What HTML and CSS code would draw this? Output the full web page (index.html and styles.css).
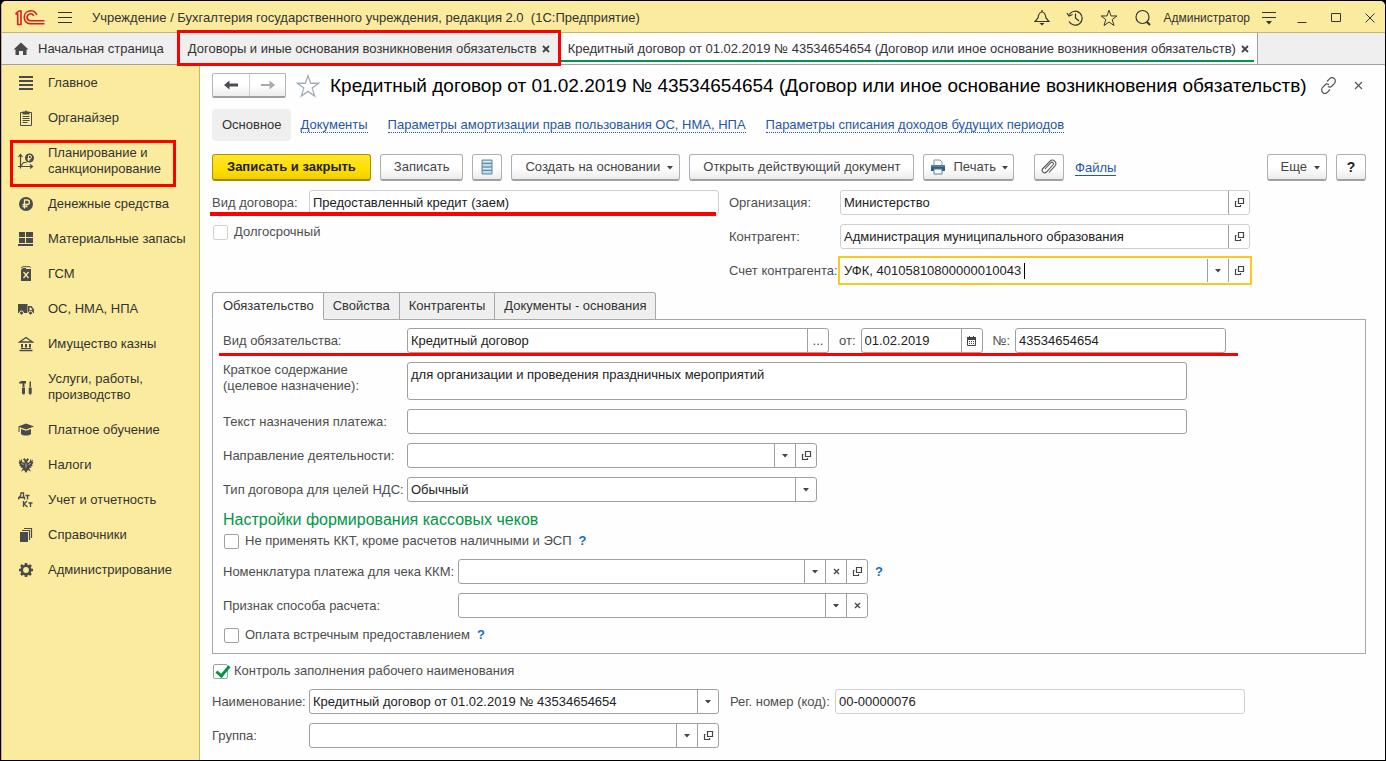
FILE: index.html
```html
<!DOCTYPE html>
<html lang="ru">
<head>
<meta charset="utf-8">
<title>Кредитный договор от 01.02.2019 № 43534654654</title>
<link rel="stylesheet" href="styles.css">
</head>
<body>
<svg class="defs" aria-hidden="true">
  <symbol id="open" viewBox="0 0 11 11"><path d="M4.500 1.500h5v5h-5zM2.500 4.500h-1v5h5v-1.500" fill="none" stroke="currentColor" stroke-width="1.200"/></symbol>
  <symbol id="arrow" viewBox="0 0 6 4"><path d="M0 0h6L3 3.500z" fill="currentColor"/></symbol>
  <symbol id="clear" viewBox="0 0 7 7"><path d="M1 1l5 5M6 1L1 6" stroke="currentColor" stroke-width="1.300"/></symbol>
  <symbol id="star" viewBox="0 0 22 22"><path d="M11 1.500l2.500 7h7.200l-5.800 4.400 2.200 7.300L11 15.900l-6.100 4.300 2.200-7.300L1.300 8.500h7.200z" fill="none" stroke="currentColor" stroke-width="1.200"/></symbol>
</svg>
<div class="app">
  <header class="titlebar">
    <svg class="logo" viewBox="0 0 30 17" width="30" height="17" aria-label="1С"><g fill="none" stroke="#d9201f" stroke-width="1.600"><path d="M.5 5L4 2h2v13.500M.5 5h2.200v10.500M2 15.500h4.700"/><path d="M21.800 6A6.500 6.500 0 1 0 15.500 14.800H29.500"/><path d="M18.800 7A3.500 3.500 0 1 0 15.500 11.800H29.500"/></g></svg>
    <button class="plain burger" aria-label="Меню"><svg width="16" height="14" viewBox="0 0 16 14"><path d="M1 1.500h14M1 6.500h14M1 11.500h14" stroke="#333"/></svg></button>
    <span class="app-title">Учреждение / Бухгалтерия государственного учреждения, редакция 2.0&nbsp; (1С:Предприятие)</span>
    <div class="title-tools">
      <button class="plain" aria-label="Уведомления"><svg width="16" height="18" viewBox="0 0 16 18"><path d="M1 12.500h14l-3-3.500C11.500 5.500 10.500 3 8 3S4.500 5.500 4 9zM8 3V1" fill="none" stroke="#333" stroke-width="1.200"/><path d="M5.500 14h5L8 16.500z" fill="#333"/></svg></button>
      <button class="plain" aria-label="История"><svg width="18" height="18" viewBox="0 0 18 18"><path d="M3.200 5.500A7 7 0 1 1 3 12.500M1 4l2 3 3.500-1.500M9.500 4.500V9l3.500 3" fill="none" stroke="#333" stroke-width="1.200"/></svg></button>
      <button class="plain" aria-label="Избранное"><svg class="dark" width="18" height="18"><use href="#star"/></svg></button>
      <button class="plain" aria-label="Поиск"><svg width="18" height="18" viewBox="0 0 18 18"><circle cx="8.500" cy="8" r="6.500" fill="none" stroke="#333" stroke-width="1.200"/><path d="M12.500 12.500l3.500 3.500" stroke="#333" stroke-width="2"/></svg></button>
      <span class="user">Администратор</span>
      <button class="plain" aria-label="Настройки"><svg width="16" height="14" viewBox="0 0 16 14"><path d="M1 1.500h14M1 6.500h14" stroke="#333"/><path d="M5 10h6l-3 3.500z" fill="#333"/></svg></button>
      <button class="plain win" aria-label="Свернуть"><svg width="12" height="12" viewBox="0 0 12 12"><path d="M1.500 10.500h9" stroke="#333"/></svg></button>
      <button class="plain win" aria-label="Развернуть"><svg width="12" height="12" viewBox="0 0 12 12"><path d="M1.500 1.500h9v8h-9z" fill="none" stroke="#333"/></svg></button>
      <button class="plain win" aria-label="Закрыть"><svg width="12" height="12" viewBox="0 0 12 12"><path d="M1.500 1.500l9 9M10.500 1.500l-9 9" stroke="#333"/></svg></button>
    </div>
  </header>
  <nav class="tabbar">
    <a class="wtab home" href="#"><svg width="16" height="14" viewBox="0 0 16 14"><path d="M8 .5L.5 7.500h2V13H6V9h4v4h3.500V7.500h2z" fill="#4a4a4a"/></svg>Начальная страница</a>
    <a class="wtab marked" href="#">Договоры и иные основания возникновения обязательств<button class="plain" aria-label="Закрыть"><svg width="8" height="8" viewBox="0 0 8 8"><path d="M1 1l6 6M7 1L1 7" stroke="#444" stroke-width="1.800"/></svg></button></a>
    <a class="wtab active" href="#">Кредитный договор от 01.02.2019 № 43534654654 (Договор или иное основание возникновения обязательств)<button class="plain" aria-label="Закрыть"><svg width="8" height="8" viewBox="0 0 8 8"><path d="M1 1l6 6M7 1L1 7" stroke="#444" stroke-width="1.800"/></svg></button></a>
  </nav>
  <div class="body">
    <nav class="sidebar">
      <a href="#"><svg viewBox="0 0 16 16"><path d="M1 2h14M1 6h14M1 10h14M1 14h14" stroke="#4a4a4a" stroke-width="2"/></svg>Главное</a>
      <a href="#"><svg viewBox="0 0 16 16"><path d="M2.500 2.500h11v13h-11zM4.500 6.500h7M4.500 8.500h7M4.500 10.500h7M4.500 12.500h5" fill="none" stroke="#4a4a4a"/><path d="M4.500 4.500V1.500H7a1 1 0 0 1 2 0h2.500v3z" fill="#4a4a4a"/></svg>Органайзер</a>
      <a class="marked" href="#"><svg viewBox="0 0 16 16"><path d="M2.500 15.500V2M0 13.500h14M.5 4l2-2.500 2 2.500M12 11.500l2.500 2-2.500 2M2.500 13.500l3-4h3" fill="none" stroke="#4a4a4a" stroke-width="1.200"/><circle cx="11.500" cy="5" r="4.500" fill="#4a4a4a"/><path d="M10.500 8V2.500H12a1.400 1.400 0 0 1 0 3H9.500M9.500 6.800h3" fill="none" stroke="#fbeb9e"/></svg>Планирование и санкционирование</a>
      <a href="#"><svg viewBox="0 0 16 16"><circle cx="8" cy="8" r="7" fill="#4a4a4a"/><path d="M6.500 12.500V4h2.700a2.200 2.200 0 0 1 0 4.500H4.500M4.500 10.500h5" fill="none" stroke="#fbeb9e" stroke-width="1.300"/></svg>Денежные средства</a>
      <a href="#"><svg viewBox="0 0 16 16"><path d="M1 1h6v5H1zM8 1h7v5H8zM1 7h6v5H1zM8 7h7v5H8zM0 13h15v2H0z" fill="#4a4a4a"/></svg>Материальные запасы</a>
      <a href="#"><svg viewBox="0 0 16 16"><path d="M3 4l2-2h3v1h5v12H3z" fill="#4a4a4a"/><path d="M3 2l2-1.300h7l1 1" fill="none" stroke="#4a4a4a"/><path d="M5.500 6l5 6M10.500 6l-5 6" stroke="#fbeb9e" stroke-width="1.300"/></svg>ГСМ</a>
      <a href="#"><svg viewBox="0 0 16 16"><path d="M0 3h9.500v9H0zM10 5h3.500L16 8.500V12h-6z" fill="#4a4a4a"/><path d="M11.500 6.500H13L14.500 9h-3z" fill="#fbeb9e"/><circle cx="3.500" cy="12" r="2" fill="#4a4a4a" stroke="#fbeb9e"/><circle cx="12.500" cy="12" r="2" fill="#4a4a4a" stroke="#fbeb9e"/></svg>ОС, НМА, НПА</a>
      <a href="#"><svg viewBox="0 0 16 16"><path d="M1.500 6L8 1.500 14.500 6zM1.500 14.500h13" fill="none" stroke="#4a4a4a" stroke-width="1.300"/><path d="M4 8v3.500M8 8v3.500M12 8v3.500" stroke="#4a4a4a" stroke-width="2"/><path d="M3 12.500h10" stroke="#4a4a4a"/></svg>Имущество казны</a>
      <a href="#"><svg viewBox="0 0 16 16"><path d="M1 3.500L3 2h5v2.500H6.500V8h-2V4.500L1 4.500zM4 8.500h3V14a1 1 0 0 1-3 0zM11.500 2.500h1.500V8h-1.500zM10.700 8.500h3V14a1 1 0 0 1-3 0z" fill="#4a4a4a"/></svg>Услуги, работы, производство</a>
      <a href="#"><svg viewBox="0 0 16 16"><path d="M8 1.500L16 4.500 8 7.500 0 4.500zM3 7l5 1.800L13 7v5c-2 2-8 2-10 0zM.5 5h1v5h-1z" fill="#4a4a4a"/></svg>Платное обучение</a>
      <a href="#"><svg viewBox="0 0 16 16"><path d="M8 3L6.500 1 5 2.500 6.500 4v2L4.500 5 3 1.500 2.700 4 1 2.500 1.500 5 .5 5l1.500 3-1 .3L3.500 10l-1.500.5L5 11l-2 3.500L6 13l2 3 2-3 3 1.500L11 11l3-.5-1.500-.5L15 8.300 14 8l1.500-3h-1L15 2.500 13.300 4 13 1.500 11.500 5l-2 1V4L11 2.500 9.500 1z" fill="#4a4a4a"/><path d="M8 6.500v4M3.500 6l2 2M12.500 6l-2 2" stroke="#fbeb9e" stroke-width=".7"/></svg>Налоги</a>
      <a href="#"><svg viewBox="0 0 16 16"><path d="M1.500 5.500c1-1 1.500-2.500 1.500-4.500h2.500v4.500M.7 7.500v-2h5.800v2M7.500 3.500h4M9.500 3.500v4M5.500 9v6M9 9l-3 3 3.500 3M10.500 11h4M12.500 11v4" fill="none" stroke="#4a4a4a" stroke-width="1.300"/></svg>Учет и отчетность</a>
      <a href="#"><svg viewBox="0 0 16 16"><path d="M2 5h8v10H2z" fill="#4a4a4a"/><path d="M4 3.500h7.500V13M6 1.500h7.500V11" fill="none" stroke="#4a4a4a" stroke-width="1.200"/></svg>Справочники</a>
      <a href="#"><svg viewBox="0 0 16 16"><circle cx="8" cy="8" r="4.200" fill="none" stroke="#4a4a4a" stroke-width="2.600"/><path d="M8 1v2.500M8 12.500V15M1 8h2.500M12.500 8H15M3 3l1.800 1.800M11.200 11.200L13 13M13 3l-1.800 1.800M4.800 11.200L3 13" stroke="#4a4a4a" stroke-width="2.600"/></svg>Администрирование</a>
    </nav>
    <main class="main">
      <div class="head">
        <div class="history"><button aria-label="Назад"><svg width="14" height="12" viewBox="0 0 14 12"><path d="M0 6l5.500-4.500V4.500H14v3H5.500v3z" fill="#4b4b55"/></svg></button><button aria-label="Вперед"><svg width="14" height="12" viewBox="0 0 14 12"><path d="M14 6L8.500 1.500V5H0v2h8.500v3.500z" fill="#aaa"/></svg></button></div>
        <button class="plain fav" aria-label="В избранное"><svg width="24" height="24"><use href="#star"/></svg></button>
        <h1>Кредитный договор от 01.02.2019 № 43534654654 (Договор или иное основание возникновения обязательств)</h1>
        <button class="plain link" aria-label="Ссылка"><svg width="17" height="17" viewBox="0 0 17 17"><path d="M7 4.500l2.500-2.700a3.300 3.300 0 0 1 5 4.500L12 9a3 3 0 0 1-4 .3M10 12.500l-2.500 2.700a3.300 3.300 0 0 1-5-4.500L5 8a3 3 0 0 1 4-.3" fill="none" stroke="#555" stroke-width="1.200"/></svg></button>
        <button class="plain close" aria-label="Закрыть"><svg width="9" height="9" viewBox="0 0 9 9"><path d="M1 1l7 7M8 1L1 8" stroke="#555" stroke-width="1.200"/></svg></button>
      </div>
      <nav class="sections">
        <a class="current" href="#">Основное</a>
        <a href="#"><span>Документы</span></a>
        <a href="#"><span>Параметры амортизации прав пользования ОС, НМА, НПА</span></a>
        <a href="#"><span>Параметры списания доходов будущих периодов</span></a>
      </nav>
      <div class="toolbar">
        <button class="btn primary">Записать и закрыть</button>
        <button class="btn">Записать</button>
        <button class="btn icon" aria-label="Реестр"><svg width="12" height="16" viewBox="0 0 12 16"><path d="M1 1h10v14H1z" fill="#a9cde0" stroke="#5f8ba5"/><path d="M1 4.500h10M1 8h10M1 11.500h10" stroke="#5f8ba5"/><path d="M2 2.500h8M2 6h8M2 9.500h8M2 13h8" stroke="#d7eaf3"/></svg></button>
        <button class="btn">Создать на основании<svg class="arr"><use href="#arrow"/></svg></button>
        <button class="btn">Открыть действующий документ</button>
        <button class="btn print"><svg width="16" height="16" viewBox="0 0 16 16"><path d="M4 6V1h6l2 2v3" fill="#fff" stroke="#7d97aa"/><path d="M1 6h14v6H1z" fill="#2f5f86"/><path d="M1 6h14v2H1z" fill="#54809f"/><path d="M4 10h8v5H4z" fill="#fff" stroke="#54809f"/></svg>Печать<svg class="arr"><use href="#arrow"/></svg></button>
        <button class="btn icon attach" aria-label="Вложения"><svg width="16" height="16" viewBox="0 0 16 16"><path d="M4 10l6-6.500a1.500 1.500 0 0 1 2.200 2L5.500 13a2.500 2.500 0 0 1-3.600-3.500L9 2.200a3.400 3.400 0 0 1 5 4.600L8 13.500" fill="none" stroke="#555" stroke-width="1.100"/></svg></button>
        <a class="files" href="#">Файлы</a>
        <button class="btn more">Еще<svg class="arr"><use href="#arrow"/></svg></button>
        <button class="btn icon help">?</button>
      </div>
      <div class="top-form">
        <div class="stack underlined">
          <div class="row"><label class="l-short" for="kind">Вид договора:</label><div class="field light"><input id="kind" value="Предоставленный кредит (заем)" readonly></div></div>
          <label class="check"><input type="checkbox" class="faint">Долгосрочный</label>
        </div>
        <div class="stack">
          <div class="row"><label class="l-right" for="org">Организация:</label><div class="field light"><input id="org" value="Министерство"><button aria-label="Открыть"><svg class="op"><use href="#open"/></svg></button></div></div>
          <div class="row"><label class="l-right" for="agent">Контрагент:</label><div class="field light"><input id="agent" value="Администрация муниципального образования"><button aria-label="Открыть"><svg class="op"><use href="#open"/></svg></button></div></div>
          <div class="row"><label class="l-right" for="acc">Счет контрагента:</label><div class="field focus"><div class="typed"><input id="acc" value="УФК, 40105810800000010043"><i class="caret"></i></div><button aria-label="Выбрать"><svg class="ar"><use href="#arrow"/></svg></button><button aria-label="Открыть"><svg class="op"><use href="#open"/></svg></button></div></div>
        </div>
      </div>
      <div class="tabs" role="tablist">
        <button role="tab" aria-selected="true" class="on">Обязательство</button><button role="tab">Свойства</button><button role="tab">Контрагенты</button><button role="tab">Документы - основания</button>
      </div>
      <section class="panel">
        <div class="row marked-row"><label class="l-panel" for="ob">Вид обязательства:</label><div class="field w-kind"><input id="ob" value="Кредитный договор"><button aria-label="Выбрать">...</button></div><label class="inl" for="dt">от:</label><div class="field w-date"><input id="dt" value="01.02.2019"><button aria-label="Календарь"><svg width="9" height="10" viewBox="0 0 9 10"><path d="M.5 1.500h8v8h-8z" fill="none" stroke="#444"/><path d="M0 1h9v3H0zM2 0h1v1H2zM6 0h1v1H6z" fill="#444"/><path d="M2 5.500h5M2 7.500h5" stroke="#444" stroke-dasharray="1 1"/></svg></button></div><label class="inl" for="no">№:</label><div class="field w-no"><input id="no" value="43534654654"></div></div>
        <div class="row top"><label class="l-panel" for="brief">Краткое содержание<br>(целевое назначение):</label><div class="field tall w-long"><textarea id="brief">для организации и проведения праздничных мероприятий</textarea></div></div>
        <div class="row"><label class="l-panel" for="txt">Текст назначения платежа:</label><div class="field w-long"><input id="txt"></div></div>
        <div class="row"><label class="l-panel" for="dir">Направление деятельности:</label><div class="field w-mid"><input id="dir"><button aria-label="Выбрать"><svg class="ar"><use href="#arrow"/></svg></button><button aria-label="Открыть"><svg class="op"><use href="#open"/></svg></button></div></div>
        <div class="row"><label class="l-panel" for="vat">Тип договора для целей НДС:</label><div class="field w-mid drop"><select id="vat"><option>Обычный</option></select><span class="cell"><svg class="ar"><use href="#arrow"/></svg></span></div></div>
        <div class="group">
          <h2>Настройки формирования кассовых чеков</h2>
          <div class="hinted"><label class="check"><input type="checkbox">Не применять ККТ, кроме расчетов наличными и ЭСП</label><a class="q" href="#">?</a></div>
        </div>
        <div class="row"><label class="l-kkm" for="nom">Номенклатура платежа для чека ККМ:</label><div class="field w-mid"><input id="nom"><button aria-label="Выбрать"><svg class="ar"><use href="#arrow"/></svg></button><button aria-label="Очистить"><svg class="cl"><use href="#clear"/></svg></button><button aria-label="Открыть"><svg class="op"><use href="#open"/></svg></button></div><a class="q" href="#">?</a></div>
        <div class="row"><label class="l-kkm" for="pay">Признак способа расчета:</label><div class="field w-mid"><input id="pay"><button aria-label="Выбрать"><svg class="ar"><use href="#arrow"/></svg></button><button aria-label="Очистить"><svg class="cl"><use href="#clear"/></svg></button></div></div>
        <div class="hinted"><label class="check"><input type="checkbox">Оплата встречным предоставлением</label><a class="q" href="#">?</a></div>
      </section>
      <div class="bottom">
        <label class="check"><input type="checkbox" checked>Контроль заполнения рабочего наименования</label>
        <div class="row"><label class="l-short" for="name">Наименование:</label><div class="field w-mid"><input id="name" value="Кредитный договор от 01.02.2019 № 43534654654"><button aria-label="Выбрать"><svg class="ar"><use href="#arrow"/></svg></button></div><label class="l-reg" for="reg">Рег. номер (код):</label><div class="field light w-mid"><input id="reg" value="00-00000076" readonly></div></div>
        <div class="row"><label class="l-short" for="grp">Группа:</label><div class="field w-mid"><input id="grp"><button aria-label="Выбрать"><svg class="ar"><use href="#arrow"/></svg></button><button aria-label="Открыть"><svg class="op"><use href="#open"/></svg></button></div></div>
      </div>
    </main>
  </div>
</div>
</body>
</html>
```
FILE: styles.css
```css
* { box-sizing: border-box; }
body { margin: 0; padding: 1px; min-height: 100vh; background: #000; display: flex; font: 13px/16px "Liberation Sans", Arial, sans-serif; color: #333; }
button, input, select, textarea { font: inherit; color: inherit; margin: 0; }
a { color: inherit; text-decoration: none; }
svg { flex: none; display: block; }
.defs { position: absolute; width: 0; height: 0; }
.plain { border: 0; background: none; padding: 0; display: flex; align-items: center; justify-content: center; }
.app { flex: 1; min-width: 0; display: flex; flex-direction: column; background: #fefefe; border-left: 1px solid #c9b664; border-radius: 5px 5px 0 0; overflow: hidden; }

.titlebar { height: 32px; display: flex; align-items: center; background: #fbeb9e; border-bottom: 1px solid #c9b664; padding: 2px 6px 0 13px; }
.burger { margin: 0 19px 0 12px; }
.app-title { flex: 1; white-space: nowrap; overflow: hidden; }
.title-tools { display: flex; align-items: center; gap: 16px; }
.user { font-size: 12px; margin: 0 -5px; }
.win { width: 18px; }
.dark { color: #333; }

.tabbar { height: 32px; display: flex; background: #efefef; border-bottom: 1px solid #a0a0a0; }
.wtab { display: flex; align-items: center; white-space: nowrap; gap: 5px; padding: 0 8px; position: relative; }
.wtab.home { gap: 9px; padding: 0 13px 0 11px; }
.wtab.marked::after { content: ""; position: absolute; inset: -3px 0 -2px 0; border: 3px solid #f00; z-index: 2; }
.wtab.marked { padding: 0 11px 0 11px; }
.wtab.active { background: #fefefe; border-right: 1px solid #a0a0a0; padding: 0 8px 0 7px; }
.wtab.active::after { content: ""; position: absolute; left: 0; right: 3px; bottom: 2px; height: 2px; background: #009646; }
.titlebar, .tabbar { flex: none; }
.app, .tabbar { position: relative; }

.body { flex: 1; display: flex; }
.sidebar { width: 198px; flex: none; background: #fbeb9e; border-right: 1px solid #c9b664; display: flex; flex-direction: column; }
.sidebar a { display: flex; align-items: center; gap: 14px; padding: 10px 12px 9px 16px; position: relative; }
.sidebar svg { width: 16px; height: 16px; }
.sidebar .marked::after { content: ""; position: absolute; inset: 5px 23px -1px 8px; border: 3px solid #f00; }

.main { flex: 1; min-width: 0; padding: 8px 19px 12px 12px; display: flex; flex-direction: column; }
.head { display: flex; align-items: center; height: 25px; }
.history { display: flex; height: 25px; border: 1px solid #b5b5b5; border-bottom: 2px solid #a0a0a0; border-radius: 2px; background: linear-gradient(#fff 50%, #ececec); }
.history button { width: 36px; border: 0; background: none; padding: 0; display: flex; align-items: center; justify-content: center; }
.history button + button { border-left: 1px solid #d0d0d0; }
.fav { margin: 0 10px; color: #a5adb5; }
h1 { margin: 0; font-size: 19px; line-height: 25px; font-weight: 400; color: #000; white-space: nowrap; }
.link { margin-left: 13px; }
.close { margin: 0 3px 0 auto; }

.sections { display: flex; align-items: center; gap: 20px; margin-top: 10px; height: 33px; color: #2457a8; white-space: nowrap; }
.sections .current { background: #efefef; border-radius: 4px; color: #333; padding: 8px 9px 8px 10px; margin-right: -10px; }
.sections span { border-bottom: 1px dotted #2457a8; }

.toolbar { display: flex; align-items: center; gap: 9px; margin-top: 13px; height: 27px; white-space: nowrap; }
.btn { height: 27px; padding: 0 13px; display: flex; align-items: center; justify-content: center; border: 1px solid #b0b0b0; border-bottom: 2px solid #a0a0a0; border-radius: 3px; background: linear-gradient(#fff 50%, #ececec); color: #444; }
.btn.primary { padding: 0 14px; font-weight: 700; color: #222; background: linear-gradient(#ffe52f, #ffdf00 60%, #efce00); border-color: #ab9300; border-bottom: 2px solid #a08b00; }
.btn.icon { padding: 0; width: 30px; }
.btn .arr { width: 6px; height: 4px; margin: 1px -7px 0 7px; }
.btn.print { padding: 0 11px 0 6px; gap: 7px; }
.btn.print .arr { margin: 1px -6px 0 -1px; }
.attach { margin-left: 11px; }
.files { color: #2457a8; border-bottom: 1px solid #2457a8; line-height: 15px; margin-left: 2px; }
.more { margin-left: auto; }
.help { font-weight: 700; color: #222; font-size: 14px; }

.top-form { display: grid; grid-template-columns: 507fr 521fr 106fr; column-gap: 10px; margin-top: 9px; }
.stack, .panel, .bottom { display: flex; flex-direction: column; gap: 9px; }
.underlined, .marked-row { position: relative; }
.underlined::after { content: ""; position: absolute; left: -2px; right: 3px; top: 22px; height: 4px; background: #f00; }
.marked-row::after { content: ""; position: absolute; left: -4px; right: 117px; bottom: -3px; height: 3px; background: #f00; }
.row { display: flex; align-items: center; color: #4d4d4d; }
.row.top { align-items: flex-start; }
.row label, .check { white-space: nowrap; }
.l-short { width: 97px; flex: none; }
.l-right { width: 111px; flex: none; }
.l-panel { width: 184px; flex: none; }
.l-kkm { width: 235px; flex: none; }
.l-reg { width: 116px; flex: none; padding-left: 11px; }
.inl { padding: 0 5px 0 10px; }
.field { flex: 1; min-width: 0; height: 25px; display: flex; border: 1px solid #a0a0a0; border-radius: 3px; background: #fff; color: #222; }
.field.light { border-color: #d0d0d0; }
.field.focus { border-color: #fff; border-radius: 0; outline: 2px solid #fac81e; }
.field input, .field textarea, .field select { flex: 1; width: 100%; min-width: 0; border: 0; background: none; padding: 0 3px; outline: 0; appearance: none; resize: none; }
.field textarea { padding: 4px 3px; display: block; }
.field button, .cell { flex: none; width: 21px; border: 0; border-left: 1px solid #a0a0a0; background: none; padding: 0; display: flex; align-items: center; justify-content: center; color: #444; }
.field.tall { height: 38px; }
.typed { flex: 1; display: flex; align-items: center; }
.field .typed input { flex: none; width: auto; field-sizing: content; }
.caret { width: 1px; height: 16px; background: #000; }
.drop { display: grid; grid-template-columns: 1fr 21px; }
.drop select { grid-area: 1 / 1 / 2 / 3; }
.drop .cell { grid-area: 1 / 2; pointer-events: none; }
.w-kind { flex: 0 1 422px; }
.w-date { flex: 0 1 122px; }
.w-no { flex: 0 1 211px; }
.w-long { flex: 0 1 780px; }
.w-mid { flex: 0 1 410px; }
.op { width: 11px; height: 11px; }
.ar { width: 6px; height: 4px; }
.cl { width: 7px; height: 7px; }

.check { display: flex; align-items: center; gap: 6px; height: 16px; padding-left: 1px; color: #4d4d4d; }
.check input { appearance: none; width: 15px; height: 15px; border: 1px solid #a0a0a0; border-radius: 2px; background: #fff; position: relative; }
.check .faint { border-color: #d0d0d0; }
.check input:checked::after { content: ""; position: absolute; left: 5px; top: -2px; width: 5px; height: 11px; border: solid #009646; border-width: 0 3px 3px 0; transform: rotate(40deg); }
.hinted { display: flex; }
.q { color: #1a6fb5; font-weight: 700; margin-left: 7px; }

.tabs { display: flex; margin-top: 9px; }
.tabs button { height: 28px; padding: 0 9px; border: 1px solid #a8a8a8; border-left-width: 0; background: #efefef; color: #333; }
.tabs button:first-child { border-left-width: 1px; border-radius: 3px 0 0 0; padding: 0 9px 0 10px; }
.tabs button:last-child { border-radius: 0 3px 0 0; }
.tabs .on { background: #fefefe; border-bottom-color: #fefefe; position: relative; }
.panel { border: 1px solid #a8a8a8; margin-top: -1px; padding: 8px 10px 10px; }
.group { display: flex; flex-direction: column; gap: 4px; margin-bottom: 1px; }
h2 { margin: 0; font-size: 16px; line-height: 18px; font-weight: 400; color: #009646; }
.bottom { margin-top: 9px; }
.bottom .check { margin-bottom: 1px; }
```
